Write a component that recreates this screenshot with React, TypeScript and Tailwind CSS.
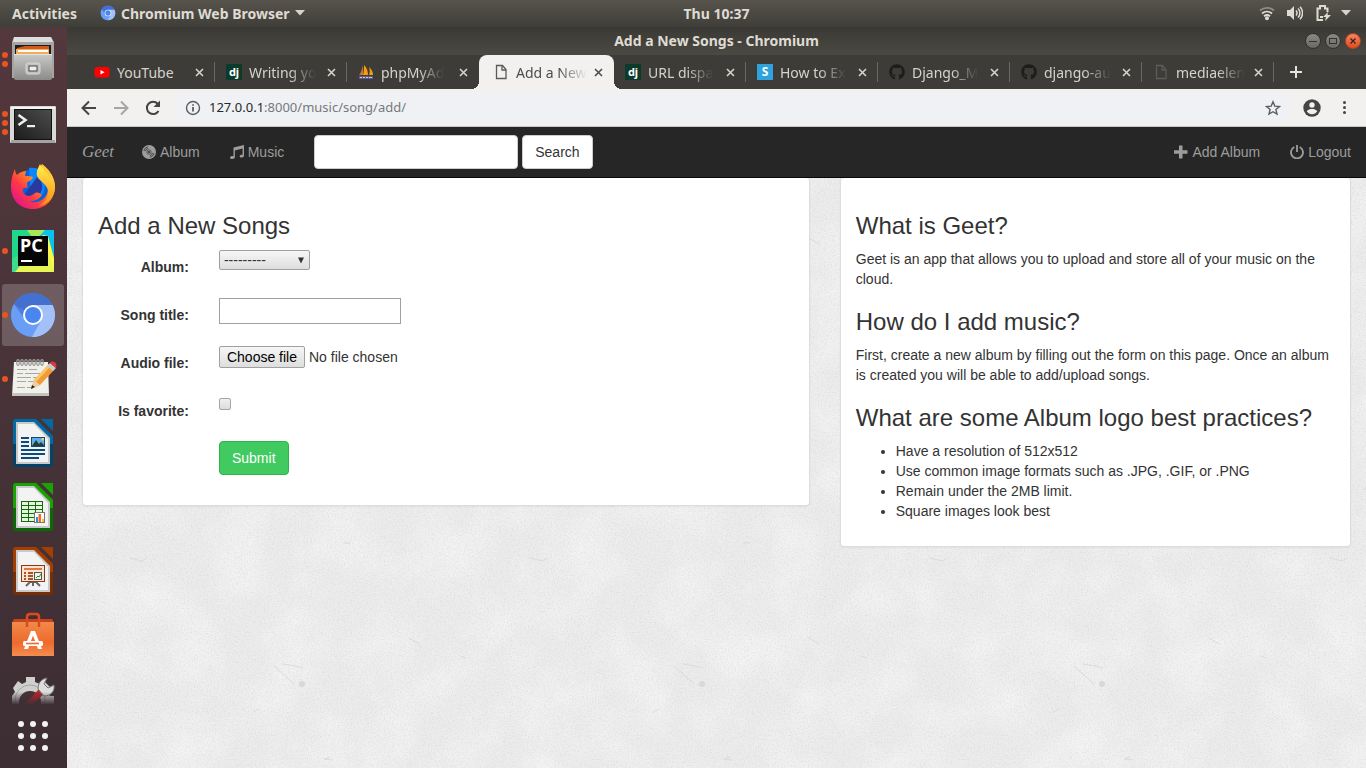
import type { ReactNode } from "react";
import { FaGithub } from "react-icons/fa";

/* ---------- dock icons ---------- */

function FilesIcon() {
  return (
    <svg viewBox="0 0 48 48" className="size-12">
      <defs>
        <linearGradient id="cab" x1="0" y1="0" x2="0" y2="1">
          <stop offset="0" stopColor="#c9c9c7" />
          <stop offset="1" stopColor="#8b8b89" />
        </linearGradient>
      </defs>
      <path d="M5 2h37l3 5v36H3V7z" fill="#a5a5a3" />
      <path d="M5 2h37l2 5H4z" fill="#dededc" />
      <rect x="6" y="10" width="36" height="10" fill="#1d1d1d" />
      <path d="M8 13l8-2h24v8H8z" fill="#d2591c" />
      <rect x="7" y="14" width="33" height="6" fill="#f3ab55" />
      <rect x="9" y="15" width="30" height="2" fill="#fff" />
      <path d="M5 19h38v24a2 2 0 0 1-2 2H7a2 2 0 0 1-2-2z" fill="url(#cab)" />
      <rect x="5" y="19" width="38" height="1" fill="#e4e4e2" />
      <rect x="17" y="28" width="14" height="11" rx="2" fill="#c2c2c0" stroke="#d6d6d4" />
      <rect x="20" y="31" width="8" height="5" fill="#eee" stroke="#444" />
    </svg>
  );
}

function TerminalIcon() {
  return (
    <svg viewBox="0 0 48 48" className="size-12">
      <defs>
        <linearGradient id="term" x1="0" y1="1" x2="1" y2="0">
          <stop offset="0" stopColor="#1c1c1c" />
          <stop offset="1" stopColor="#4a4c4a" />
        </linearGradient>
      </defs>
      <rect x="1" y="7" width="46" height="37" rx="1" fill="#d9d9d7" />
      <rect x="2" y="8" width="44" height="2" fill="#f5f5f5" />
      <rect x="2" y="41" width="44" height="3" fill="#a3a3a1" />
      <rect x="5" y="10" width="38" height="31" fill="#111" />
      <rect x="6" y="11" width="36" height="29" fill="url(#term)" />
      <path d="M9.500 16l7 5-7 5" fill="none" stroke="#eee" strokeWidth="2.600" />
      <rect x="18" y="26" width="8" height="2.200" fill="#eee" />
    </svg>
  );
}

function FirefoxIcon() {
  return (
    <svg viewBox="0 0 48 48" className="size-12">
      <defs>
        <linearGradient id="ff" x1="1" y1="0" x2="0.100" y2="0.900">
          <stop offset="0" stopColor="#fff44f" />
          <stop offset="0.400" stopColor="#ff9a1f" />
          <stop offset="0.700" stopColor="#ff3a45" />
          <stop offset="1" stopColor="#e2148c" />
        </linearGradient>
        <linearGradient id="ffy" x1="0.500" y1="0" x2="0.500" y2="1">
          <stop offset="0" stopColor="#fff04a" />
          <stop offset="1" stopColor="#ff8a16" />
        </linearGradient>
      </defs>
      <circle cx="24" cy="23" r="17" fill="#0b62d6" />
      <path d="M20 5c9-1 16 3 18 12l-4 14-12 4z" fill="#0a84ff" />
      <path d="M28 14c6 4 7 12 2 18-5 4-11 2-14-1z" fill="#2a3a9c" />
      <path d="M6 6c0 3 1 5 2 6 3-3 6-4 9-4l-1 5c3 0 6 0 8 1-1 4-5 4-6 6 0 2 1 3 0 5-3-1-5 0-4 4 2 5 8 5 12 1 3-1 5 0 7 2-3 5-9 7-14 6 10 4 19-2 20-11 1-6-6-9-10-14-1-5 2-9 4-12 7 5 12 12 13 22 0 13-9 23-22 23S2 37 2 24C2 16 4 10 6 6z" fill="url(#ff)" />
      <path d="M31 1c-3 6-5 10-1 15 5 5 10 8 9 15-1 6-5 10-10 12 10-1 17-9 17-19 0-7-3-11-4-13l-1 4c-3-6-8-9-10-14z" fill="url(#ffy)" />
    </svg>
  );
}

function PyCharmIcon() {
  return (
    <svg viewBox="0 0 48 48" className="size-12">
      <rect x="3" y="3" width="42" height="42" fill="#21d789" />
      <path d="M18 3h27v26L35 16z" fill="#07c3f2" />
      <path d="M18 3h18L26 14z" fill="#a8ea5a" />
      <path d="M3 34L34 8l5 3 6 34H6z" fill="#e8f552" />
      <path d="M34 8l5 1 6 22v14z" fill="#fcf84a" />
      <path d="M3 32l8-5v12l-5 6H3z" fill="#3ddb8d" />
      <rect x="9" y="9" width="30" height="30" fill="#050505" />
      <text x="11" y="25" fill="#fff" fontSize="18" fontWeight="700" className="font-['Noto_Sans',sans-serif]">PC</text>
      <rect x="12" y="33" width="11" height="2" fill="#fff" />
    </svg>
  );
}

function ChromiumIcon({ className }: { className: string }) {
  return (
    <svg viewBox="0 0 48 48" className={className}>
      <circle cx="24" cy="24" r="22" fill="#4a7fe0" />
      <path d="M24 24L4.500 13A22 22 0 0 1 43.500 14H24z" fill="#4470cf" />
      <path d="M5 13A22 22 0 0 0 24 46l9-18-18-1z" fill="#6a9df5" />
      <path d="M24 14h19.600A22 22 0 0 1 23 46l10-18z" fill="#a3c1f8" />
      <circle cx="24" cy="24" r="10" fill="#fff" />
      <circle cx="24" cy="24" r="8" fill="#4a86f0" />
    </svg>
  );
}

function NotesIcon() {
  return (
    <svg viewBox="0 0 48 48" className="size-12">
      <path d="M5 7h34l1 34H3z" fill="#f1f1ec" />
      <path d="M3 38h37v3H3z" fill="#c4c4bc" />
      <g fill="none" stroke="#999" strokeWidth="1.200">
        {[9, 13, 17, 21, 25, 29, 33].map((x) => (
          <ellipse key={x} cx={x} cy="7.500" rx="1.300" ry="2.800" />
        ))}
      </g>
      <g stroke="#a8a8a3" strokeWidth="1">
        <path d="M8 14.500h10m2 0h8M8 18.500h6m2 0h15M8 22.500h14m2 0h6M8 26.500h9m2 0h6M8 32.500h8m2 0h5" />
      </g>
      <path d="M22 34l3-9L40 9l6 5-15 16z" fill="#f39a32" />
      <path d="M25 25L40 9l2 2-15 16z" fill="#fbc56b" />
      <path d="M22 34l3-9 6 5z" fill="#ecd0a4" />
      <path d="M22 34l1-4 3 2z" fill="#222" />
      <path d="M38 11l3-3 6 5-3 3z" fill="#ccc" />
      <path d="M41 8c2-3 8-1 6 5z" fill="#e2363c" />
    </svg>
  );
}

function OfficeIcon({ main, dark, children }: { main: string; dark: string; children: ReactNode }) {
  return (
    <svg viewBox="0 0 48 48" className="size-12">
      <path d="M7 0h20l17 17v28a3 3 0 0 1-3 3H7a3 3 0 0 1-3-3V3a3 3 0 0 1 3-3z" fill={dark} />
      <path d="M7 0h20l17 17v8H4V3a3 3 0 0 1 3-3z" fill={main} />
      <path d="M7 3h18l16 16v26H7z" fill="#c9c9c9" />
      <path d="M9 5h16l14 15v23H9z" fill="#f3f3f3" />
      <path d="M32 0h12v12z" fill={main} />
      {children}
    </svg>
  );
}

function WriterIcon() {
  return (
    <OfficeIcon main="#0369a3" dark="#02436a">
      <path d="M12 19h8m-8 4h8m-8 4h8m-8 4h24m-24 4h24m-24 4h18" stroke="#0b4c7c" strokeWidth="2" />
      <rect x="22" y="18" width="14" height="10" fill="#5cb0e6" />
      <path d="M23 27l4-6 3 4 2-2 4 4v1H23z" fill="#2d3a3a" />
      <circle cx="34" cy="20" r="1.500" fill="#f3d34a" />
      <rect x="22.500" y="18.500" width="13" height="9" fill="none" stroke="#0b4c7c" />
    </OfficeIcon>
  );
}

function CalcIcon() {
  return (
    <OfficeIcon main="#18a303" dark="#0b6a04">
      <rect x="12" y="18" width="22" height="21" fill="#146b0b" />
      <g fill="#e2f7dc">
        {[19, 23, 27, 31, 35].map((y) =>
          [13, 20, 27].map((x) => <rect key={x + "-" + y} x={x} y={y} width="6" height="3" />),
        )}
      </g>
      <rect x="25.500" y="29.500" width="10" height="10" fill="#fff" stroke="#777" />
      <path d="M27 34h2v5h-2z" fill="#2d8fe0" />
      <path d="M29.500 31h2.500v8h-2.500z" fill="#f26a1b" />
      <path d="M33 36h2v3h-2z" fill="#f4c430" />
    </OfficeIcon>
  );
}

function ImpressIcon() {
  return (
    <OfficeIcon main="#a33e03" dark="#7a2c02">
      <path d="M17 39l4-4h6l4 4m-7-4v4" stroke="#666" strokeWidth="2" fill="none" />
      <rect x="12.500" y="18.500" width="23" height="16" fill="#fbe3d3" stroke="#8a3a12" />
      <rect x="15" y="21" width="18" height="2" fill="#e07a3c" />
      <path d="M15 26h2m2 0h5m-9 3h2m2 0h5m-9 3h2m2 0h5" stroke="#a8532a" strokeWidth="2" />
      <rect x="25.500" y="25.500" width="7" height="7" fill="#e9f5e6" stroke="#555" />
      <path d="M27 31l2-2 1 1 2-3" stroke="#2a8a2a" fill="none" />
    </OfficeIcon>
  );
}

function SoftwareIcon() {
  return (
    <svg viewBox="0 0 48 48" className="size-12">
      <defs>
        <linearGradient id="bag" x1="0" y1="0" x2="0" y2="1">
          <stop offset="0" stopColor="#f08a4b" />
          <stop offset="0.600" stopColor="#ee6a2c" />
          <stop offset="1" stopColor="#f48d50" />
        </linearGradient>
      </defs>
      <path d="M5 8h38l2 4H3z" fill="#c9441a" />
      <rect x="3" y="11" width="42" height="34" fill="url(#bag)" />
      <path d="M18 16V6c0-2 1-3 3-3h6c2 0 3 1 3 3v10" fill="none" stroke="#dd4a1b" strokeWidth="2.500" />
      <path d="M22 20h4l7 18h-4l-5-13.500L19 38h-4z" fill="#fff" />
      <rect x="14" y="30" width="20" height="5" rx="1.500" fill="#fff" />
      <path d="M17 32.500h13" stroke="#ee6a2c" strokeWidth="1.600" />
    </svg>
  );
}

function SettingsIcon() {
  return (
    <svg viewBox="0 0 48 48" className="size-12 [mask-image:linear-gradient(to_bottom,black_35%,transparent_62%)]">
      <path d="M17 2h9v5l5 2 4-3 6 6-3 4 3 5h4v9H3v-9l3-4-2-4 5-7 4 3 4-2z" fill="#cfcfcd" />
      <circle cx="21" cy="25" r="15" fill="none" stroke="#a5a5a3" />
      <circle cx="21" cy="27" r="11" fill="#473238" />
      <path d="M15 30L30 14l5 5-14 13z" fill="#b5272b" />
      <path d="M29 14c0-6 3-10 9-11l-3 6 4 4 6-3c1 6-3 11-10 11z" fill="#ddd" stroke="#777" />
    </svg>
  );
}

const dock: { name: string; dots: number; active?: boolean; icon: ReactNode }[] = [
  { name: "Files", dots: 2, icon: <FilesIcon /> },
  { name: "Terminal", dots: 3, icon: <TerminalIcon /> },
  { name: "Firefox", dots: 0, icon: <FirefoxIcon /> },
  { name: "PyCharm", dots: 1, icon: <PyCharmIcon /> },
  { name: "Chromium", dots: 1, active: true, icon: <ChromiumIcon className="size-12" /> },
  { name: "Text Editor", dots: 1, icon: <NotesIcon /> },
  { name: "Writer", dots: 0, icon: <WriterIcon /> },
  { name: "Calc", dots: 0, icon: <CalcIcon /> },
  { name: "Impress", dots: 0, icon: <ImpressIcon /> },
  { name: "Ubuntu Software", dots: 0, icon: <SoftwareIcon /> },
  { name: "Settings", dots: 0, icon: <SettingsIcon /> },
];

function Dock() {
  return (
    <nav aria-label="Dock" className="flex w-[67px] shrink-0 flex-col bg-linear-to-b from-[#53383d] to-[#3c2e33] pr-px">
      <div className="min-h-0 flex-1 overflow-hidden">
        {dock.map((d) => (
          <button key={d.name} aria-label={d.name} className="relative flex h-16 w-full items-center justify-center p-px">
            <span className={d.active ? "flex size-[62px] items-center justify-center rounded-[3px] bg-white/20" : "flex"}>
              {d.icon}
            </span>
            <span className="absolute inset-y-0 left-[2px] flex flex-col justify-center gap-[3px]">
              {Array.from({ length: d.dots }, (_, i) => (
                <i key={i} className="size-[6px] rounded-full bg-[#e95420]" />
              ))}
            </span>
          </button>
        ))}
      </div>
      <button aria-label="Show Applications" className="grid h-16 shrink-0 grid-cols-3 place-content-center justify-center gap-[6px] px-[18px]">
        {Array.from({ length: 9 }, (_, i) => (
          <i key={i} className="size-[6px] rounded-full bg-[#f2f2f2]" />
        ))}
      </button>
    </nav>
  );
}

/* ---------- top bar ---------- */

function Caret() {
  return (
    <svg viewBox="0 0 10 6" className="h-[6px] w-[10px] fill-[#d5d3ce]">
      <path d="M0 0h10L5 5.500z" />
    </svg>
  );
}

function TopBar() {
  return (
    <header className="grid h-[27px] shrink-0 grid-cols-[67px_1fr_auto_1fr] items-center bg-linear-to-b from-[#57544c] to-[#3f3e39] px-3 pb-px text-[14px] font-bold text-[#dfdbd2]">
      <div className="col-span-2 flex items-center gap-[23px]">
        <button>Activities</button>
        <button className="flex items-center gap-[5px]">
          <ChromiumIcon className="size-4" />
          <span>Chromium Web Browser</span>
          <Caret />
        </button>
      </div>
      <time>Thu 10:37</time>
      <div className="flex items-center justify-end gap-[10px] pr-[3px]">
        <div className="flex items-center gap-3">
          <svg viewBox="0 0 16 16" className="size-4" fill="none" strokeWidth="1.800">
            <path d="M1 5.500C5 2 11 2 15 5.500" stroke="#8d8b85" />
            <path d="M3 8.500c3-2.600 7-2.600 10 0M5 11.200c2-1.600 4-1.600 6 0" stroke="#dfdbd2" />
            <circle cx="8" cy="13.300" r="2" fill="#dfdbd2" />
          </svg>
          <svg viewBox="0 0 16 16" className="size-4" fill="none" stroke="#dfdbd2" strokeWidth="1.500">
            <path d="M0 5h3l4-4v14l-4-4H0z" fill="#dfdbd2" stroke="none" />
            <path d="M9 5.500c1.300 1.500 1.300 3.500 0 5M11 3.500c2.600 2.500 2.600 6.500 0 9M13 1.800c3.400 3.600 3.400 8.800 0 12.400" />
          </svg>
          <svg viewBox="0 0 16 16" className="size-4" fill="none" stroke="#dfdbd2" strokeWidth="2">
            <path d="M8 15H2.500V3.500H5V1h5v2.500h2.500V7" />
            <path d="M5 12h3" />
            <path d="M13 7l-5 5h3l-1 4 6-6h-3.500z" fill="#dfdbd2" stroke="none" />
          </svg>
        </div>
        <Caret />
      </div>
    </header>
  );
}

function TitleBar() {
  return (
    <div className="relative flex h-7 items-center justify-center bg-linear-to-b from-[#3a3935] to-[#4b4943] pb-px text-[14px] font-bold text-[#dfdbd2]">
      <h1>Add a New Songs - Chromium</h1>
      <div className="absolute inset-y-0 right-[5px] flex items-center gap-1">
        <button aria-label="Minimise" className="flex size-4 items-center justify-center rounded-full border border-[#33322e] bg-linear-to-b from-[#8b8982] to-[#6b6963]">
          <svg viewBox="0 0 8 8" className="size-2"><path d="M0 4.500h8" stroke="#33322e" /></svg>
        </button>
        <button aria-label="Maximise" className="flex size-4 items-center justify-center rounded-full border border-[#33322e] bg-linear-to-b from-[#8b8982] to-[#6b6963]">
          <svg viewBox="0 0 8 8" className="size-2"><rect x="0.500" y="1.500" width="7" height="5" fill="none" stroke="#33322e" /></svg>
        </button>
        <button aria-label="Close" className="flex size-4 items-center justify-center rounded-full border border-[#b8431f] bg-linear-to-b from-[#f58361] to-[#df4b1c]">
          <svg viewBox="0 0 8 8" className="size-2"><path d="M1.500 1.500l5 5m0-5l-5 5" stroke="#3c2218" strokeWidth="1.300" /></svg>
        </button>
      </div>
    </div>
  );
}

/* ---------- tabs ---------- */

function DocIcon({ stroke }: { stroke: string }) {
  return (
    <svg viewBox="0 0 16 16" className="size-4" fill="none" stroke={stroke} strokeWidth="1.300">
      <path d="M3.500 1.500h6l3.500 4v9H3.500z" />
      <path d="M9 1.500V6h4" />
    </svg>
  );
}

const djIcon = (
  <svg viewBox="0 0 16 16" className="size-4">
    <rect width="16" height="16" fill="#0c3a2b" />
    <text x="8" y="12" textAnchor="middle" fontSize="11" fontWeight="700" fill="#fff" className="font-['Noto_Sans',sans-serif]">dj</text>
  </svg>
);

const youtubeIcon = (
  <svg viewBox="0 0 16 16" className="size-4">
    <rect x="0.500" y="3" width="15" height="10.500" rx="2.500" fill="#f00" />
    <path d="M6.500 6v4.500L10.500 8.200z" fill="#fff" />
  </svg>
);

const pmaIcon = (
  <svg viewBox="0 0 16 16" className="size-4">
    <path d="M5 1v10H1C3 9 4 5 5 1z" fill="#c87a2a" />
    <path d="M6 1c3 3 4 6 4 10H5c1-3 1-7 1-10z" fill="#f89c0e" />
    <path d="M11 3c3 3 4 5 4 8h-4c1-3 1-5 0-8z" fill="#f89c0e" />
    <path d="M1 12h14v3H1z" fill="#5d5a8c" />
    <path d="M2 13.500h2m1 0h2m1 0h2m1 0h3" stroke="#c9c6e8" />
  </svg>
);

const sIcon = (
  <svg viewBox="0 0 16 16" className="size-4">
    <rect width="16" height="16" fill="#2fa3de" />
    <text x="8" y="12" textAnchor="middle" fontSize="12" fontWeight="700" fill="#fff" className="font-['Noto_Sans',sans-serif]">S</text>
  </svg>
);

const github = <FaGithub className="size-4 text-[#1d1d1c]" />;

const tabs: { title: string; icon: ReactNode; sep: boolean; active?: boolean }[] = [
  { title: "YouTube", icon: youtubeIcon, sep: true },
  { title: "Writing yo", icon: djIcon, sep: true },
  { title: "phpMyAd", icon: pmaIcon, sep: false },
  { title: "Add a New", icon: <DocIcon stroke="#5a5a5a" />, sep: false, active: true },
  { title: "URL dispa", icon: djIcon, sep: true },
  { title: "How to Ex", icon: sIcon, sep: true },
  { title: "Django_M", icon: github, sep: true },
  { title: "django-au", icon: github, sep: true },
  { title: "mediaelen", icon: <DocIcon stroke="#5d5c58" />, sep: true },
];

function CloseX() {
  return (
    <svg viewBox="0 0 9 9" className="size-[9px]" stroke="currentColor" strokeWidth="1.600">
      <path d="M1 1l7 7M8 1L1 8" />
    </svg>
  );
}

function TabStrip() {
  return (
    <div role="tablist" className="flex h-[34px] items-stretch bg-[#3d3c38] pl-4 text-[14px]">
      {tabs.map((t) => (
        <div
          key={t.title}
          role="tab"
          aria-selected={!!t.active}
          className={
            t.active
              ? "relative flex w-[135px] items-center gap-[7px] rounded-t-lg bg-[#f2f1f0] pr-3 pl-[14px] text-[#4c4c4c]"
              : "relative flex w-[132px] items-center gap-[7px] pr-[11px] pl-[11px] text-[#d6d3cd]"
          }
        >
          {t.active && (
            <>
              <i className="absolute bottom-0 -left-2 size-2 bg-[radial-gradient(circle_at_0_0,#3d3c38_8px,#f2f1f0_8px)]" />
              <i className="absolute -right-2 bottom-0 size-2 bg-[radial-gradient(circle_at_100%_0,#3d3c38_8px,#f2f1f0_8px)]" />
            </>
          )}
          <span className="shrink-0">{t.icon}</span>
          <span
            className={
              t.title === "YouTube"
                ? "whitespace-nowrap"
                : "whitespace-nowrap [mask-image:linear-gradient(to_right,black_60%,transparent)]"
            }
          >
            {t.title}
          </span>
          <button aria-label={"Close " + t.title} className="ml-auto">
            <CloseX />
          </button>
          {t.sep && <i className="absolute top-[7px] right-0 h-5 w-px bg-[#6a6862]" />}
        </div>
      ))}
      <button aria-label="New tab" className="px-4">
        <svg viewBox="0 0 12 12" className="size-3" stroke="#e6e3dd" strokeWidth="2">
          <path d="M6 0v12M0 6h12" />
        </svg>
      </button>
    </div>
  );
}

/* ---------- toolbar ---------- */

function Toolbar() {
  return (
    <div className="flex h-[38px] items-center border-b border-[#c9cac8] bg-[#f2f1f0] pr-[17px] pl-3">
      <div className="flex items-center gap-3">
        <button aria-label="Back">
          <svg viewBox="0 0 20 20" className="size-5" fill="none" stroke="#454545" strokeWidth="2">
            <path d="M17 10H4M10 3.500L3.500 10l6.500 6.500" />
          </svg>
        </button>
        <button aria-label="Forward">
          <svg viewBox="0 0 20 20" className="size-5" fill="none" stroke="#a5a5a5" strokeWidth="2">
            <path d="M3 10h13M10 3.500l6.500 6.500-6.500 6.500" />
          </svg>
        </button>
        <button aria-label="Reload">
          <svg viewBox="0 0 20 20" className="size-5" fill="none" stroke="#454545" strokeWidth="2">
            <path d="M15.500 13a6.200 6.200 0 1 1-.8-7.300" />
            <path d="M17 2.500V9h-6.500z" fill="#454545" stroke="none" />
          </svg>
        </button>
      </div>
      <div className="ml-3 flex h-[30px] flex-1 items-center rounded-full bg-[#eff1f4] px-[10px]">
        <svg viewBox="0 0 16 16" className="size-4" fill="none" stroke="#5a5d61" strokeWidth="1.400">
          <circle cx="8" cy="8" r="6.500" />
          <path d="M8 7v4.500M8 4.200v1.600" strokeWidth="1.800" />
        </svg>
        <a href="#address" className="ml-2 flex-1 text-[13px] text-[#77797c]">
          <span className="text-[#26282b]">127.0.0.1</span>:8000/music/song/add/
        </a>
        <button aria-label="Bookmark">
          <svg viewBox="0 0 16 16" className="size-4" fill="none" stroke="#5a5d61" strokeWidth="1.400">
            <path d="M8 1.800l1.800 4.300 4.700.4-3.600 3 1.100 4.600L8 11.700l-4 2.400 1.100-4.600-3.600-3 4.700-.4z" />
          </svg>
        </button>
      </div>
      <button aria-label="Profile" className="ml-3">
        <svg viewBox="0 0 18 18" className="size-[18px]">
          <circle cx="9" cy="9" r="8.700" fill="#454545" />
          <circle cx="9" cy="6" r="2.700" fill="#f2f1f0" />
          <path d="M3.700 12.300C5 10.500 7 10 9 10s4 .5 5.300 2.300C13 14.300 11 15.300 9 15.300s-4-1-5.300-3z" fill="#f2f1f0" />
        </svg>
      </button>
      <button aria-label="Menu" className="ml-[18px] flex w-[10px] flex-col items-center gap-[2px]">
        <i className="size-[3px] rounded-full bg-[#454545]" />
        <i className="size-[3px] rounded-full bg-[#454545]" />
        <i className="size-[3px] rounded-full bg-[#454545]" />
      </button>
    </div>
  );
}

/* ---------- site ---------- */

function NavBar() {
  const link = "flex items-center gap-1 px-[15px]";
  return (
    <nav className="flex h-[51px] items-stretch border-b border-[#080808] bg-[#262626] text-[14px] leading-5 text-[#9d9d9d]">
      <a href="#home" className="flex w-[60px] items-center pl-[15px] font-['Liberation_Serif',serif] text-[17px] italic">Geet</a>
      <a href="#album" className={link}>
        <svg viewBox="0 0 14 14" className="size-[14px]">
          <circle cx="7" cy="7" r="7" fill="#9d9d9d" />
          <circle cx="7" cy="7" r="2.200" fill="none" stroke="#262626" strokeWidth="0.600" />
          <circle cx="7" cy="7" r="0.900" fill="#262626" />
          <path d="M1.800 6A5.300 5.300 0 0 1 6 1.800M3.300 6.200A3.900 3.900 0 0 1 6.200 3.300M12.200 8A5.300 5.300 0 0 1 8 12.200M10.700 7.800A3.900 3.900 0 0 1 7.800 10.700" fill="none" stroke="#262626" strokeWidth="0.700" />
        </svg>
        Album
      </a>
      <a href="#music" className={link}>
        <svg viewBox="0 0 14 14" className="size-[14px] fill-[#9d9d9d]">
          <path d="M3.500 2.500L14 0v10.500c0 1.400-1.400 2-2.500 2-1.200 0-1.900-.6-1.900-1.300 0-1 1.300-1.700 3-1.400V3.500L4.900 5.400v6.900C4.900 13.400 3.600 14 2.200 14 .8 14 0 13.500 0 12.700c0-1.100 1.600-1.900 3.500-1.500z" />
        </svg>
        Music
      </a>
      <form role="search" className="flex items-center gap-1 pl-[15px]" onSubmit={(e) => e.preventDefault()}>
        <input type="text" aria-label="Search" className="h-[34px] w-[204px] rounded border border-[#ccc] bg-white px-3 text-[#555]" />
        <button className="h-[34px] rounded border border-[#ccc] bg-white px-3 text-[#333]">Search</button>
      </form>
      <div className="ml-auto flex">
        <a href="#add" className={link}>
          <svg viewBox="0 0 14 14" className="size-[14px] fill-[#9d9d9d]">
            <path d="M5 .5h3.500v4.700h5v3.500h-5v4.800H5V8.700H0V5.200h5z" />
          </svg>
          Add Album
        </a>
        <a href="#logout" className={link}>
          <svg viewBox="0 0 14 14" className="size-[14px]" fill="none" stroke="#9d9d9d" strokeWidth="1.800">
            <path d="M4.300 2A6 6 0 1 0 9.700 2M7 0v7" />
          </svg>
          Logout
        </a>
      </div>
    </nav>
  );
}

function PaperTexture() {
  return (
    <svg aria-hidden="true" className="absolute inset-0 -z-10 h-full w-full">
      <defs>
        <filter id="grain" x="0" y="0" width="100%" height="100%">
          <feTurbulence type="fractalNoise" baseFrequency="0.700" numOctaves="2" seed="4" />
          <feColorMatrix values="0 0 0 0 0.500  0 0 0 0 0.500  0 0 0 0 0.500  0.700 0 0 0 -0.310" />
        </filter>
        <filter id="patches" x="0" y="0" width="100%" height="100%">
          <feTurbulence type="fractalNoise" baseFrequency="0.020" numOctaves="5" seed="9" />
          <feColorMatrix values="0 0 0 0 1  0 0 0 0 1  0 0 0 0 1  0.800 0 0 0 -0.300" />
        </filter>
        <pattern id="specks" width="400" height="400" patternUnits="userSpaceOnUse">
          <g fill="none" stroke="#dadada" strokeLinecap="round">
            <circle cx="235" cy="106" r="3" fill="#d8d8d8" stroke="none" />
            <path d="M207 88l20 18M216 86l12 2 8 2M63 380l12 3 5-3M277 365h6M263 179l-6 2 8 1M186 134l6-3" />
            <path d="M394 78l5 2M96 312l5-2M342 60l10 6M150 260l6 4M20 210l5 5M310 240l7 5" />
          </g>
        </pattern>
      </defs>
      <rect width="100%" height="100%" fill="#ececec" />
      <rect width="100%" height="100%" filter="url(#patches)" />
      <rect width="100%" height="100%" filter="url(#grain)" />
      <rect width="100%" height="100%" fill="url(#specks)" />
    </svg>
  );
}

function FormRow({ id, label, children }: { id: string; label: string; children: ReactNode }) {
  return (
    <div className="flex h-12 items-start">
      <label htmlFor={id} className="w-1/6 px-[15px] pt-2 text-right font-bold">{label}</label>
      <div className="flex flex-1 items-center px-[15px] pt-px">{children}</div>
    </div>
  );
}

function SongForm() {
  return (
    <section className="col-span-7 self-start rounded border border-t-0 border-[#ddd] bg-white p-[15px] shadow-xs">
      <h3 className="mt-5 mb-[10px] text-[24px] leading-[26px]">Add a New Songs</h3>
      <form className="-mx-[15px] mb-[15px]" onSubmit={(e) => e.preventDefault()}>
        <FormRow id="album" label="Album:">
          <div className="relative">
            <select id="album" className="block h-5 w-[91px] appearance-none rounded-[2px] border border-[#a0a0a0] bg-linear-to-b from-[#f6f6f6] to-[#dedede] pl-1 text-[14px] leading-[18px]">
              <option>---------</option>
            </select>
            <span className="pointer-events-none absolute inset-y-0 right-[5px] flex items-center">
              <svg viewBox="0 0 8 7" className="h-[7px] w-2 fill-[#333]"><path d="M1 0.500h6L4 6.500z" /></svg>
            </span>
          </div>
        </FormRow>
        <FormRow id="title" label="Song title:">
          <input id="title" type="text" className="h-[26px] w-[182px] border border-[#a0a0a0] bg-white px-1" />
        </FormRow>
        <FormRow id="audio" label="Audio file:">
          <input id="audio" type="file" className="sr-only" />
          <label htmlFor="audio" className="h-[22px] rounded-[2px] border border-[#a0a0a0] bg-linear-to-b from-[#f6f6f6] to-[#dedede] px-[7px] leading-5 text-black">Choose file</label>
          <span className="ml-1">No file chosen</span>
        </FormRow>
        <FormRow id="favorite" label="Is favorite:">
          <input id="favorite" type="checkbox" className="mt-1 size-3 appearance-none rounded-[2px] border border-[#a5a5a5] bg-linear-to-b from-[#f0f0f0] to-[#dcdcdc] checked:bg-[#3ecf63]" />
        </FormRow>
        <div className="flex">
          <div className="w-1/6" />
          <div className="px-[15px]">
            <button className="h-[34px] rounded border border-[#2bb54b] bg-[#41ca60] px-3 text-white">Submit</button>
          </div>
        </div>
      </form>
    </section>
  );
}

function HelpPanel() {
  const h = "mt-5 mb-[10px] text-[24px] leading-[26px]";
  return (
    <aside className="col-span-5 self-start rounded border border-t-0 border-[#ddd] bg-white p-[15px] shadow-xs">
      <h3 className={h}>What is Geet?</h3>
      <p>Geet is an app that allows you to upload and store all of your music on the cloud.</p>
      <h3 className={h}>How do I add music?</h3>
      <p>First, create a new album by filling out the form on this page. Once an album is created you will be able to add/upload songs.</p>
      <h3 className={h}>What are some Album logo best practices?</h3>
      <ul className="mb-[10px] list-disc pl-10">
        <li>Have a resolution of 512x512</li>
        <li>Use common image formats such as .JPG, .GIF, or .PNG</li>
        <li>Remain under the 2MB limit.</li>
        <li>Square images look best</li>
      </ul>
    </aside>
  );
}

export default function App() {
  return (
    <div className="flex h-screen flex-col overflow-hidden font-['Noto_Sans','Open_Sans',sans-serif]">
      <TopBar />
      <div className="flex min-h-0 flex-1">
        <Dock />
        <div className="flex min-w-0 flex-1 flex-col">
          <TitleBar />
          <TabStrip />
          <Toolbar />
          <div className="flex min-h-0 flex-1 flex-col font-['Liberation_Sans',Arial,sans-serif]">
            <NavBar />
            <main className="relative isolate min-h-0 flex-1 overflow-hidden text-[14px] leading-5 text-[#333]">
              <PaperTexture />
              <div className="grid grid-cols-12 gap-x-[30px] px-[15px]">
                <SongForm />
                <HelpPanel />
              </div>
            </main>
          </div>
        </div>
      </div>
    </div>
  );
}
